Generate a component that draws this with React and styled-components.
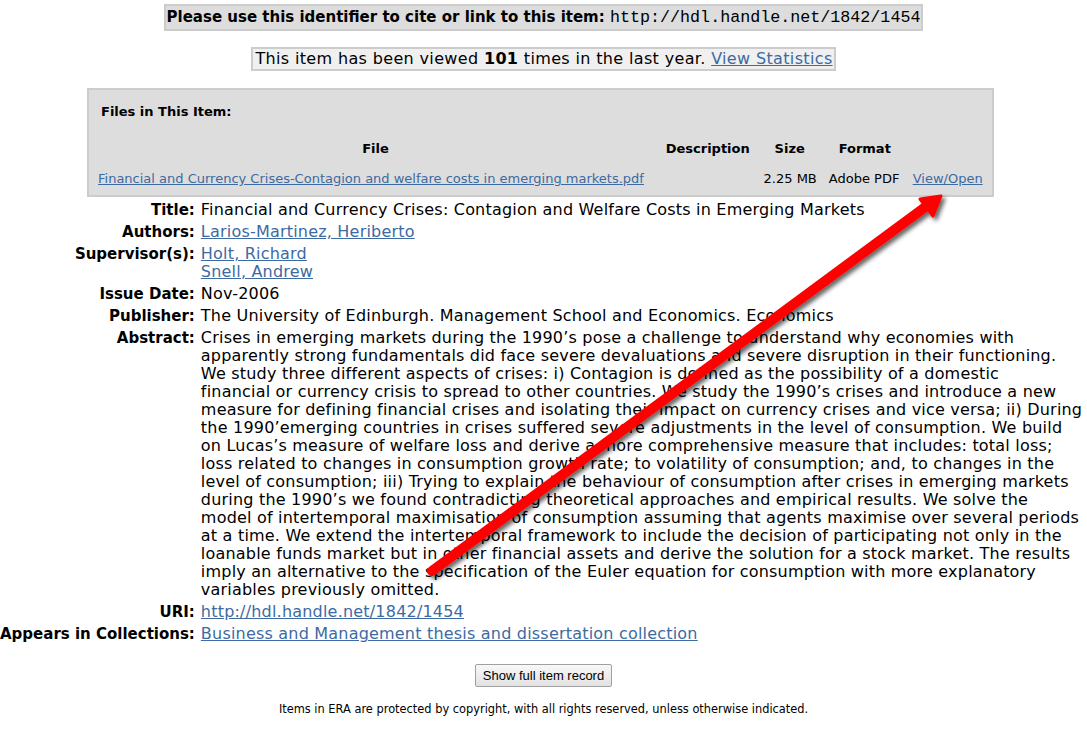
import React from 'react';
import styled, { createGlobalStyle } from 'styled-components';

const GlobalStyle = createGlobalStyle`
  html, body {
    margin: 0;
    padding: 0;
    background: #fff;
    color: #000;
    font-family: "DejaVu Sans", Verdana, sans-serif;
  }
`;

// --- Styled Components ---
const Page = styled.div`
  position: relative;
  width: 1087px;
  min-height: 739px;
  padding-top: 4px;
  box-sizing: border-box;
`;

const Centered = styled.div`
  display: flex;
  justify-content: center;
  margin-bottom: ${(p) => p.$gap || 0}px;
`;

const CiteBox = styled.div`
  background: #ddd;
  border: 2px solid #ccc;
  padding: 1px 1px 1px 1px;
  font-size: 15px;
  font-weight: bold;
  line-height: 20px;
`;

const Mono = styled.code`
  font-family: "Liberation Mono", "Courier New", monospace;
  font-weight: normal;
  font-size: 16.7px;
`;

const ViewsBox = styled.div`
  background: #f0f0f0;
  border: 2px solid #ccc;
  padding: 0 1px 0 2px;
  font-size: 16px;
  letter-spacing: 0.35px;
  line-height: 20px;
`;

const A = styled.a`
  color: #3d6aa2;
  text-decoration: underline;
`;

const FilesPanel = styled.div`
  margin: 0 93px 0 87px;
  background: #ddd;
  border: 2px solid #ccc;
  padding: 14px 2px 9px 3px;
  font-size: 13px;
  line-height: 15px;
`;

const FilesHeading = styled.div`
  font-weight: bold;
  padding-left: 9px;
  margin-bottom: 22px;
`;

const FileTable = styled.table`
  width: 100%;
  border-collapse: collapse;
`;

const Th = styled.th`
  text-align: center;
  padding: 0 6px 15px;
  font-weight: bold;
`;

const Td = styled.td`
  padding: 0 6px;
  white-space: nowrap;
  text-align: ${(p) => p.$align || 'left'};
`;

const MetaTable = styled.table`
  border-collapse: collapse;
  margin-top: 2px;
  line-height: 18px;
`;

const Label = styled.td`
  font-weight: bold;
  font-size: 15px;
  text-align: right;
  vertical-align: top;
  white-space: nowrap;
  padding: 2px 6px 2px 0;
  width: 191px;
`;

const Value = styled.td`
  vertical-align: top;
  font-size: 16px;
  letter-spacing: 0.2px;
  padding: 2px 0;
`;

const AbstractLine = styled.span`
  display: block;
  white-space: nowrap;
`;

const Actions = styled.div`
  display: flex;
  justify-content: center;
  margin-top: 19px;
`;

const Button = styled.button`
  font-family: "Liberation Sans", Arial, sans-serif;
  font-size: 13px;
  line-height: 15px;
  padding: 3px 7px;
  background: linear-gradient(#f8f8f8, #e2e2e2);
  border: 1px solid #a0a0a0;
  border-radius: 2px;
  color: #000;
`;

const Footer = styled.p`
  margin: 15px 0 0;
  text-align: center;
  font-size: 11.4px;
`;

const ArrowLayer = styled.svg`
  position: absolute;
  left: 0;
  top: 0;
  pointer-events: none;
`;

const abstractLines = [
  'Crises in emerging markets during the 1990’s pose a challenge to understand why economies with',
  'apparently strong fundamentals did face severe devaluations and severe disruption in their functioning.',
  'We study three different aspects of crises: i) Contagion is defined as the possibility of a domestic',
  'financial or currency crisis to spread to other countries. We study the 1990’s crises and introduce a new',
  'measure for defining financial crises and isolating their impact on currency crises and vice versa; ii) During',
  'the 1990’emerging countries in crises suffered severe adjustments in the level of consumption. We build',
  'on Lucas’s measure of welfare loss and derive a more comprehensive measure that includes: total loss;',
  'loss related to changes in consumption growth rate; to volatility of consumption; and, to changes in the',
  'level of consumption; iii) Trying to explain the behaviour of consumption after crises in emerging markets',
  'during the 1990’s we found contradicting theoretical approaches and empirical results. We solve the',
  'model of intertemporal maximisation of consumption assuming that agents maximise over several periods',
  'at a time. We extend the intertemporal framework to include the decision of participating not only in the',
  'loanable funds market but in other financial assets and derive the solution for a stock market. The results',
  'imply an alternative to the specification of the Euler equation for consumption with more explanatory',
  'variables previously omitted.',
];

const Arrow = () => (
  <ArrowLayer width="1087" height="739">
    <defs>
      <filter id="shadow" x="-20%" y="-20%" width="140%" height="140%">
        <feDropShadow dx="3" dy="3" stdDeviation="2" floodColor="#000" floodOpacity="0.6" />
      </filter>
    </defs>
    <g filter="url(#shadow)">
      <line x1="432" y1="571" x2="924" y2="208" stroke="#f00" strokeWidth="10" strokeLinecap="round" />
      <polygon points="941,196 920,199 933,216" fill="#f00" stroke="#f00" strokeWidth="3" strokeLinejoin="round" />
    </g>
  </ArrowLayer>
);

const rows = [
  ['Title:', 'Financial and Currency Crises: Contagion and Welfare Costs in Emerging Markets'],
  ['Authors:', <A href="#">Larios-Martinez, Heriberto</A>],
  ['Supervisor(s):', <><A href="#">Holt, Richard</A><br /><A href="#">Snell, Andrew</A></>],
  ['Issue Date:', 'Nov-2006'],
  ['Publisher:', 'The University of Edinburgh. Management School and Economics. Economics'],
  ['Abstract:', abstractLines.map((line) => <AbstractLine key={line}>{line}</AbstractLine>)],
  ['URI:', <A href="#">http://hdl.handle.net/1842/1454</A>],
  ['Appears in Collections:', <A href="#">Business and Management thesis and dissertation collection</A>],
];

// --- Component ---
const App = () => (
  <Page>
    <GlobalStyle />
    <Centered $gap={16}>
      <CiteBox>
        Please use this identifier to cite or link to this item: <Mono>http://hdl.handle.net/1842/1454</Mono>
      </CiteBox>
    </Centered>
    <Centered $gap={17}>
      <ViewsBox>
        This item has been viewed <b>101</b> times in the last year. <A href="#">View Statistics</A>
      </ViewsBox>
    </Centered>
    <FilesPanel>
      <FilesHeading>Files in This Item:</FilesHeading>
      <FileTable>
        <thead>
          <tr>
            <Th>File</Th>
            <Th>Description</Th>
            <Th>Size</Th>
            <Th>Format</Th>
            <Th />
          </tr>
        </thead>
        <tbody>
          <tr>
            <Td><A href="#">Financial and Currency Crises-Contagion and welfare costs in emerging markets.pdf</A></Td>
            <Td />
            <Td $align="right">2.25 MB</Td>
            <Td>Adobe PDF</Td>
            <Td><A href="#">View/Open</A></Td>
          </tr>
        </tbody>
      </FileTable>
    </FilesPanel>
    <MetaTable>
      <tbody>
        {rows.map(([label, value]) => (
          <tr key={label}>
            <Label>{label}</Label>
            <Value>{value}</Value>
          </tr>
        ))}
      </tbody>
    </MetaTable>
    <Actions>
      <Button>Show full item record</Button>
    </Actions>
    <Footer>Items in ERA are protected by copyright, with all rights reserved, unless otherwise indicated.</Footer>
    <Arrow />
  </Page>
);

export default App;
